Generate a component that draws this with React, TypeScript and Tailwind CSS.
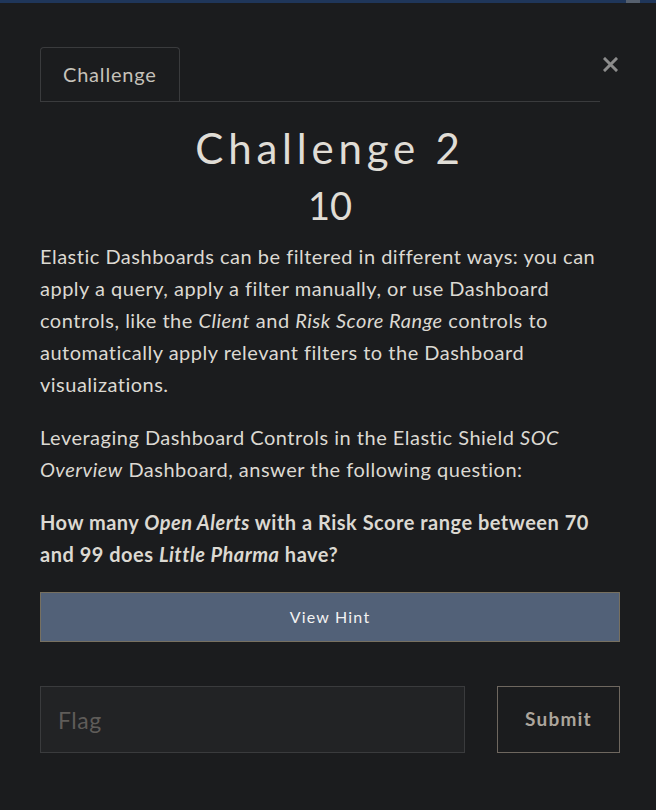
import { useState } from "react";

export default function App() {
  const [flag, setFlag] = useState("");

  return (
    <div className="min-h-[810px] w-full bg-[#1b1c1e] font-['Lato','Noto_Sans',sans-serif] text-[#dcd9d2]">
      {/* page strip peeking above the modal */}
      <div className="flex h-[3px] bg-[#1f365a]">
        <div className="ml-[626px] w-[14px] bg-[#56606e]" />
      </div>

      <div className="pl-[40px] pr-[36px] pt-[44px]">
        {/* header: tabs + close */}
        <div className="flex items-start">
          <div className="flex flex-1 border-b border-[#3a3b3d]">
            <div className="flex h-[54px] items-center rounded-t-[4px] border border-b-0 border-[#3a3b3d] px-[22px] pb-[2px] text-[20px] tracking-[0.8px] text-[#c6c2ba]">
              Challenge
            </div>
          </div>
          <button className="mt-[7px] flex h-[20px] w-[20px] items-center justify-center">
            <svg width="15" height="15" viewBox="0 0 15 15" fill="none">
              <path d="M2 2L13 13M13 2L2 13" stroke="#8c8c8c" strokeWidth="3" strokeLinecap="square" />
            </svg>
          </button>
        </div>

        <h1 className="mt-[21px] text-center text-[42px] leading-[50px] tracking-[4.8px] text-[#e0ddd6]">
          Challenge 2
        </h1>
        <h2 className="mt-[10px] text-center text-[38px] leading-[44px] text-[#e0ddd6]">10</h2>

        <div className="mt-[13px] text-[20px] leading-[32px] tracking-[0.5px]">
          <p className="mb-[21px]">
            Elastic Dashboards can be filtered in different ways: you can apply a query, apply a filter
            manually, or use Dashboard controls, like the <em>Client</em> and <em>Risk Score Range</em>{" "}
            controls to automatically apply relevant filters to the Dashboard visualizations.
          </p>
          <p className="mb-[21px]">
            Leveraging Dashboard Controls in the Elastic Shield <em>SOC Overview</em> Dashboard, answer the
            following question:
          </p>
          <p className="font-bold">
            How many <em>Open Alerts</em> with a Risk Score range between 70 and 99 does{" "}
            <em>Little Pharma</em> have?
          </p>
        </div>

        <button className="mt-[22px] h-[50px] w-full border border-[#777060] bg-[#526178] text-[16px] tracking-[1.2px] text-[#f2f2f2]">
          View Hint
        </button>

        <form
          className="mt-[44px] flex gap-[32px]"
          onSubmit={(e) => {
            e.preventDefault();
          }}
        >
          <input
            value={flag}
            onChange={(e) => setFlag(e.target.value)}
            placeholder="Flag"
            className="h-[67px] flex-1 border border-[#3a3b3d] bg-[#222325] px-[17px] text-[23px] tracking-[0.5px] text-[#dcd9d2] outline-none placeholder:text-[#5f5c59]"
          />
          <button
            type="submit"
            className="h-[67px] w-[123px] border border-[#6e675f] text-[19px] font-bold tracking-[1.2px] text-[#aca59c]"
          >
            Submit
          </button>
        </form>
      </div>
    </div>
  );
}
